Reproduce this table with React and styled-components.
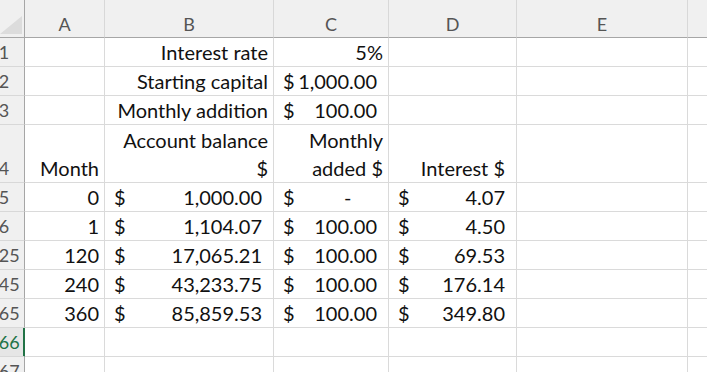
import React from "react";
import styled, { createGlobalStyle } from "styled-components";

const GlobalStyle = createGlobalStyle`
  html, body { margin: 0; padding: 0; background: #ffffff; overflow: hidden; }
`;

const Viewport = styled.div`
  width: 707px;
  height: 372px;
  overflow: hidden;
  background: #ffffff;
`;

const Sheet = styled.div`
  display: grid;
  grid-template-columns: 41px 80px 169px 115px 128px 171px 100px;
  grid-template-rows: 38px 29px 29px 29px 58px repeat(7, 29px);
  margin-left: -16px;
  font-family: Lato, "Open Sans", sans-serif;
`;

const Corner = styled.div`
  box-sizing: border-box;
  background: #f0f0f0;
  border-right: 1px solid #a6a6a6;
  border-bottom: 1px solid #a6a6a6;
  display: flex;
  justify-content: flex-end;
  align-items: flex-end;
  padding: 0 2px 3px 0;
`;

const ColHeader = styled.div`
  box-sizing: border-box;
  background: #f0f0f0;
  border-right: 1px solid #d8d8d8;
  border-bottom: 1px solid #a6a6a6;
  display: flex;
  justify-content: center;
  align-items: flex-end;
  font-size: 18px;
  line-height: 22px;
  padding-bottom: 2px;
  color: #555555;
`;

const RowHeader = styled.div`
  box-sizing: border-box;
  background: ${(p) => (p.$selected ? "#e6e6e6" : "#f0f0f0")};
  border-right: 1px solid ${(p) => (p.$selected ? "#217346" : "#a6a6a6")};
  border-bottom: 1px solid #d8d8d8;
  box-shadow: ${(p) => (p.$selected ? "inset -1px 0 0 #217346" : "none")};
  display: flex;
  justify-content: center;
  align-items: flex-end;
  font-size: 18px;
  line-height: 28px;
  color: ${(p) => (p.$selected ? "#217346" : "#555555")};
`;

const Cell = styled.div`
  box-sizing: border-box;
  border-right: 1px solid #dadada;
  border-bottom: 1px solid #dadada;
  display: flex;
  align-items: flex-end;
  justify-content: ${(p) => (p.$align === "left" ? "flex-start" : "flex-end")};
  padding: 0 ${(p) => (p.$padRight != null ? p.$padRight : 5)}px 0 4px;
  font-size: 20px;
  line-height: 28px;
  color: #111111;
  white-space: nowrap;
  text-align: right;
`;

const Money = styled(Cell)`
  justify-content: space-between;
  padding: 0 11px 0 9px;
`;

const Dash = styled.span`
  padding-right: 2.2ch;
`;

const Stack = styled.span`
  display: block;
  text-align: right;
`;

function Triangle() {
  return (
    <svg width="22" height="18" viewBox="0 0 22 18">
      <polygon points="0,18 22,18 22,0" fill="#dcdcdc" />
    </svg>
  );
}

const cols = ["A", "B", "C", "D", "E", ""];

const dataRows = [
  { n: "5", m: "0", b: "1,000.00", c: null, d: "4.07" },
  { n: "6", m: "1", b: "1,104.07", c: "100.00", d: "4.50" },
  { n: "125", m: "120", b: "17,065.21", c: "100.00", d: "69.53" },
  { n: "245", m: "240", b: "43,233.75", c: "100.00", d: "176.14" },
  { n: "365", m: "360", b: "85,859.53", c: "100.00", d: "349.80" },
];

function EmptyCells({ count }) {
  return Array.from({ length: count }, (_, i) => <Cell key={i} />);
}

export default function App() {
  return (
    <Viewport>
      <GlobalStyle />
      <Sheet>
        <Corner>
          <Triangle />
        </Corner>
        {cols.map((c, i) => (
          <ColHeader key={i}>{c}</ColHeader>
        ))}

        <RowHeader>1</RowHeader>
        <Cell />
        <Cell>Interest rate</Cell>
        <Cell>5%</Cell>
        <EmptyCells count={3} />

        <RowHeader>2</RowHeader>
        <Cell />
        <Cell>Starting capital</Cell>
        <Money>
          <span>$</span>
          <span>1,000.00</span>
        </Money>
        <EmptyCells count={3} />

        <RowHeader>3</RowHeader>
        <Cell />
        <Cell>Monthly addition</Cell>
        <Money>
          <span>$</span>
          <span>100.00</span>
        </Money>
        <EmptyCells count={3} />

        <RowHeader>4</RowHeader>
        <Cell>Month</Cell>
        <Cell>
          <Stack>
            Account balance
            <br />$
          </Stack>
        </Cell>
        <Cell>
          <Stack>
            Monthly
            <br />
            added $
          </Stack>
        </Cell>
        <Cell $padRight={11}>Interest $</Cell>
        <EmptyCells count={2} />

        {dataRows.map((r) => (
          <React.Fragment key={r.n}>
            <RowHeader>{r.n}</RowHeader>
            <Cell>{r.m}</Cell>
            <Money>
              <span>$</span>
              <span>{r.b}</span>
            </Money>
            <Money>
              <span>$</span>
              {r.c ? <span>{r.c}</span> : <Dash>-</Dash>}
            </Money>
            <Money>
              <span>$</span>
              <span>{r.d}</span>
            </Money>
            <EmptyCells count={2} />
          </React.Fragment>
        ))}

        <RowHeader $selected>366</RowHeader>
        <EmptyCells count={6} />

        <RowHeader>367</RowHeader>
        <EmptyCells count={6} />
      </Sheet>
    </Viewport>
  );
}
